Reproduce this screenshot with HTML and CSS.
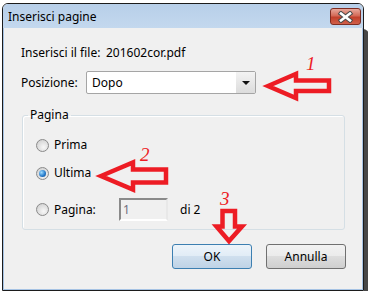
FILE: index.html
```html
<!DOCTYPE html>
<html lang="it">
<head>
  <meta charset="UTF-8">
  <title>Inserisci pagine</title>
  <link rel="stylesheet" href="styles.css">
</head>
<body>
  <div class="window">
    <div class="titlebar">
      <span class="title">Inserisci pagine</span>
      <button class="close">
        <svg width="17" height="12" viewBox="0 0 17 12">
          <path d="M4 2.5 L13 9.5 M13 2.5 L4 9.5" stroke="#4a4a4a" stroke-width="4.6" stroke-linecap="square"/>
          <path d="M4 2.5 L13 9.5 M13 2.5 L4 9.5" stroke="#fff" stroke-width="2.6" stroke-linecap="square"/>
        </svg>
      </button>
    </div>
    <div class="client">
      <div class="row file-row">
        <span class="label">Inserisci il file:</span>
        <span>201602cor.pdf</span>
      </div>
      <div class="row pos-row">
        <span class="label short">Posizione:</span>
        <div class="combo">
          <span class="combo-text">Dopo</span>
          <span class="drop"><span class="caret"></span></span>
        </div>
      </div>

      <fieldset class="group">
        <legend>Pagina</legend>
        <div class="opt first"><span class="radio"></span>Prima</div>
        <div class="opt"><span class="radio checked"></span>Ultima</div>
        <div class="opt page-opt">
          <span class="radio"></span>
          <span class="page-label">Pagina:</span>
          <span class="pagebox">1</span>
          <span class="of">di 2</span>
        </div>
      </fieldset>

      <div class="buttons">
        <button class="btn ok">OK</button>
        <button class="btn">Annulla</button>
      </div>
    </div>
  </div>

  <!-- red hand-drawn annotations over the dialog -->
  <svg class="marks" width="368" height="296" viewBox="0 0 368 296">
    <g fill="none" stroke="#ed1c24" stroke-width="4.5" stroke-linejoin="miter">
      <path d="M268 86 L296 74 L296 80.5 L329 80.5 L329 91 L296 91 L296 98 Z"/>
      <path d="M101 176 L133 162.5 L133 169.5 L166 169.5 L166 182.5 L133 182.5 L133 189.5 Z"/>
      <path d="M222.5 211 L235 211 L235 226.5 L242 226.5 L229 241 L216.5 226.5 L222.5 226.5 Z"/>
    </g>
    <g class="nums" fill="#ed1c24">
      <text x="306" y="70">1</text>
      <text x="140" y="161">2</text>
      <text x="220" y="205">3</text>
    </g>
  </svg>
</body>
</html>
```

FILE: styles.css
```css
body {
  margin: 0;
  padding: 3px 0 0 2px;
  background: #fff;
  font-family: "Noto Sans", "Open Sans", sans-serif;
  font-size: 12px;
  color: #000;
}
.window {
  width: 360px;
  border: 1px solid #1c1c1c;
  border-radius: 6px 6px 0 0;
  box-shadow: 5px 26px 0 #474747;
}
.titlebar {
  display: flex;
  align-items: flex-start;
  justify-content: space-between;
  height: 24px;
  padding: 0 2px 0 5px;
  border-radius: 5px 5px 0 0;
  background: linear-gradient(#b7cfe9, #c3d8ee);
}
.title {
  line-height: 26px;
  font-size: 12px;
}
.close {
  width: 31px;
  height: 17px;
  margin-top: 4px;
  padding: 0;
  display: flex;
  align-items: center;
  justify-content: center;
  border: 1px solid #7f2d22;
  border-radius: 3px;
  background: linear-gradient(#e8a89c, #d46a57 45%, #c2402b 55%, #d0604a);
}
.client {
  height: 261px;
  border: 1px solid #a6c3e4;
  border-top: none;
  background: #f0f0f0;
  padding-left: 17px;
}
.row {
  display: flex;
  align-items: center;
  line-height: 16px;
}
.file-row {
  padding-top: 17px;
}
.label {
  width: 85px;
}
.label.short {
  width: 65px;
}
.pos-row {
  margin-top: 10px;
}
.combo {
  display: flex;
  width: 168px;
  height: 21px;
  border: 1px solid #a5a5a5;
  border-radius: 2px;
  background: #fff;
}
.combo-text {
  flex: 1;
  padding-left: 5px;
  line-height: 21px;
}
.drop {
  width: 19px;
  display: flex;
  align-items: center;
  justify-content: center;
  background: linear-gradient(#f3f3f3, #dcdcdc);
}
.caret {
  width: 0;
  height: 0;
  border-left: 4px solid transparent;
  border-right: 4px solid transparent;
  border-top: 4px solid #111;
}
.group {
  width: 321px;
  margin: 13px 0 0 1px;
  padding: 0 0 8px 0;
  border: 1px solid #d5dfe5;
  border-radius: 3px;
  box-shadow: inset 1px 1px 0 #fff;
}
.group legend {
  margin-left: 5px;
  padding: 0 2px;
  line-height: 16px;
}
.opt {
  display: flex;
  align-items: center;
  margin-left: 13px;
  margin-top: 12px;
  line-height: 16px;
}
.opt.first {
  margin-top: 14px;
}
.opt.page-opt {
  margin-top: 17px;
}
.radio {
  position: relative;
  width: 11px;
  height: 11px;
  margin-right: 5px;
  border: 1px solid #8a8a8a;
  border-radius: 50%;
  background: radial-gradient(circle at 60% 65%, #f8f8f8, #dcdcdc 60%, #c8c8c8);
}
.radio.checked::after {
  content: "";
  position: absolute;
  left: 2px;
  top: 2px;
  width: 7px;
  height: 7px;
  border-radius: 50%;
  background: radial-gradient(circle at 35% 35%, #9fdcff, #2a7fce 55%, #0b3f80);
}
.page-label {
  width: 65px;
}
.pagebox {
  width: 43px;
  height: 19px;
  padding-left: 2px;
  border: 2px solid;
  border-color: #8a8a8a #e8e8e8 #fff #8a8a8a;
  line-height: 19px;
  color: #6f6f7f;
  background: #f0f0f0;
}
.of {
  margin-left: 12px;
}
.buttons {
  display: flex;
  justify-content: flex-end;
  gap: 14px;
  margin-top: 14px;
  padding-right: 16px;
}
.btn {
  width: 80px;
  height: 25px;
  padding: 0;
  font-family: inherit;
  font-size: 12px;
  color: #000;
  border: 1px solid #707070;
  border-radius: 3px;
  background: linear-gradient(#f2f2f2, #ebebeb 49%, #dddddd 50%, #cfcfcf);
}
.btn.ok {
  border-color: #3c7fb1;
  background: linear-gradient(#edf4fa, #e1ecf6 49%, #cfdfee 50%, #bfd3e6);
}
.marks {
  position: absolute;
  left: 0;
  top: 0;
  pointer-events: none;
}
.nums {
  font-family: "Liberation Serif", serif;
  font-style: italic;
  font-size: 19px;
}
```
